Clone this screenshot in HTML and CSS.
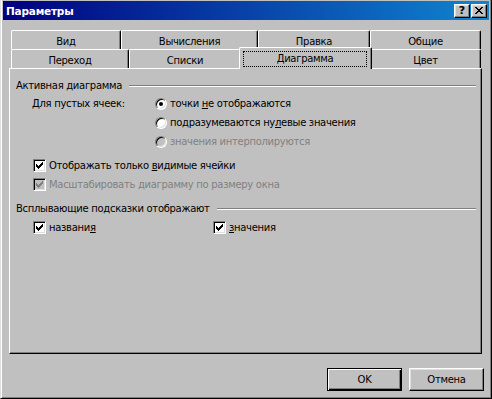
FILE: index.html
```html
<!DOCTYPE html>
<html lang="ru">
<head>
  <meta charset="UTF-8">
  <title>Параметры</title>
  <link rel="stylesheet" href="styles.css">
</head>
<body>
  <div class="window">
    <!-- title bar -->
    <div class="titlebar">
      <span class="title">Параметры</span>
      <div class="caption-buttons">
        <span class="cap-btn cap-help">?</span>
        <span class="cap-btn">
          <svg width="8" height="7" viewBox="0 0 8 7" shape-rendering="crispEdges"><path d="M0 0h2v1H0zM6 0h2v1H6zM1 1h2v1H1zM5 1h2v1H5zM2 2h4v1H2zM3 3h2v1H3zM2 4h4v1H2zM1 5h2v1H1zM5 5h2v1H5zM0 6h2v1H0zM6 6h2v1H6z" fill="#000"/></svg>
        </span>
      </div>
    </div>

    <!-- tabs, two rows -->
    <div class="tabs">
      <div class="tab-row">
        <div class="tab tab-view">Вид</div>
        <div class="tab tab-calc">Вычисления</div>
        <div class="tab tab-edit">Правка</div>
        <div class="tab tab-general">Общие</div>
      </div>
      <div class="tab-row">
        <div class="tab tab-move">Переход</div>
        <div class="tab tab-lists">Списки</div>
        <div class="tab tab-chart active"><span class="focus">Диаграмма</span></div>
        <div class="tab tab-color">Цвет</div>
      </div>
    </div>

    <div class="panel">
      <div class="group-head">
        <span>Активная диаграмма</span>
        <span class="rule"></span>
      </div>

      <div class="empty-cells">
        <span class="empty-label">Для пустых ячеек:</span>
        <div class="radios">
          <div class="option">
            <span class="radio checked"></span>
            <span>точки <u>н</u>е отображаются</span>
          </div>
          <div class="option">
            <span class="radio"></span>
            <span>подразумеваются ну<u>л</u>евые значения</span>
          </div>
          <div class="option disabled">
            <span class="radio"></span>
            <span>значения интерполируются</span>
          </div>
        </div>
      </div>

      <div class="option cb-first indent">
        <span class="check"><svg width="7" height="7" viewBox="0 0 7 7" shape-rendering="crispEdges"><path d="M0 2h1v3H0zM1 3h1v3H1zM2 4h1v3H2zM3 3h1v3H3zM4 2h1v3H4zM5 1h1v3H5zM6 0h1v3H6z"/></svg></span>
        <span>Отображать только <u>в</u>идимые ячейки</span>
      </div>
      <div class="option cb-next indent disabled">
        <span class="check"><svg width="7" height="7" viewBox="0 0 7 7" shape-rendering="crispEdges"><path d="M0 2h1v3H0zM1 3h1v3H1zM2 4h1v3H2zM3 3h1v3H3zM4 2h1v3H4zM5 1h1v3H5zM6 0h1v3H6z"/></svg></span>
        <span>Масштабировать диаграмму по размеру окна</span>
      </div>

      <div class="group-head second">
        <span>Всплывающие подсказки отображают</span>
        <span class="rule"></span>
      </div>

      <div class="tips">
        <div class="option tip-names">
          <span class="check"><svg width="7" height="7" viewBox="0 0 7 7" shape-rendering="crispEdges"><path d="M0 2h1v3H0zM1 3h1v3H1zM2 4h1v3H2zM3 3h1v3H3zM4 2h1v3H4zM5 1h1v3H5zM6 0h1v3H6z"/></svg></span>
          <span>названи<u>я</u></span>
        </div>
        <div class="option">
          <span class="check"><svg width="7" height="7" viewBox="0 0 7 7" shape-rendering="crispEdges"><path d="M0 2h1v3H0zM1 3h1v3H1zM2 4h1v3H2zM3 3h1v3H3zM4 2h1v3H4zM5 1h1v3H5zM6 0h1v3H6z"/></svg></span>
          <span><u>з</u>начения</span>
        </div>
      </div>
    </div>

    <div class="buttons">
      <button class="btn default">OK</button>
      <button class="btn">Отмена</button>
    </div>
  </div>
</body>
</html>
```

FILE: styles.css
```css
*{
  box-sizing: border-box;
}
body{
  margin: 0;
  background: #c0c0c0;
  font-family: "DejaVu Sans", sans-serif;
  font-size: 10px;
  letter-spacing: -0.3px;
  color: #000;
}
u{
  text-decoration: underline;
  text-underline-offset: 1px;
}

.window{
  width: 492px;
  height: 399px;
  background: #c0c0c0;
  border-left: 1px solid #dfdfdf;
  border-right: 1px solid #000;
  border-bottom: 1px solid #000;
  box-shadow: inset 1px 0 #fff, inset -1px -1px #808080;
  padding: 1px 2px 0 2px;
  display: flex;
  flex-direction: column;
}

/* title bar */
.titlebar{
  height: 19px;
  background: linear-gradient(to right, #000080, #1084d0);
  display: flex;
  align-items: center;
  padding: 0 2px 0 3px;
}
.title{
  color: #fff;
  font-weight: bold;
  font-size: 10.5px;
  letter-spacing: -0.2px;
}
.caption-buttons{
  margin-left: auto;
  display: flex;
  gap: 1px;
}
.cap-btn{
  width: 16px;
  height: 14px;
  background: #c0c0c0;
  border: 1px solid;
  border-color: #fff #000 #000 #fff;
  box-shadow: inset -1px -1px #808080, inset 1px 1px #dfdfdf;
  display: flex;
  align-items: center;
  justify-content: center;
}
.cap-help{
  font-weight: bold;
  font-size: 11px;
  line-height: 12px;
  letter-spacing: 0;
}

/* tabs */
.tabs{
  margin-top: 10px;
  padding-left: 8px;
}
.tab-row{
  display: flex;
}
.tab{
  height: 19px;
  border-left: 1px solid #fff;
  border-top: 1px solid #fff;
  border-right: 1px solid #000;
  border-radius: 2px 2px 0 0;
  box-shadow: inset -1px 0 #808080;
  background: #c0c0c0;
  text-align: center;
  padding-top: 4px;
  line-height: 13px;
}
.tab-view{ width: 110px; }
.tab-calc{ width: 137px; }
.tab-edit{ width: 112px; }
.tab-general{ width: 111px; }
.tab-move{ width: 118px; }
.tab-lists{ width: 112px; }
.tab-chart{ width: 129px; }
.tab-color{ width: 111px; }

.tab.active{
  position: relative;
  z-index: 1;
  width: 133px;
  height: 22px;
  margin: -2px -2px -1px;
  padding: 3px 4px 0 3px;
}
.focus{
  display: block;
  height: 16px;
  line-height: 14px;
  border: 1px dotted #000;
}

/* panel */
.panel{
  margin: 0 7px 0 6px;
  height: 286px;
  border-left: 1px solid #fff;
  border-top: 1px solid #fff;
  border-right: 1px solid #000;
  border-bottom: 1px solid #000;
  box-shadow: inset -1px -1px #808080;
  padding: 10px 5px 0 6px;
}
.group-head{
  display: flex;
  align-items: center;
  height: 13px;
  line-height: 13px;
}
.group-head.second{
  margin-top: 11px;
}
.rule{
  flex: 1;
  height: 2px;
  margin-left: 7px;
  border-top: 1px solid #808080;
  border-bottom: 1px solid #fff;
}

.empty-cells{
  display: flex;
  margin-top: 5px;
}
.empty-label{
  width: 139px;
  padding-left: 16px;
  line-height: 13px;
}
.radios{
  display: flex;
  flex-direction: column;
  gap: 6px;
}

.option{
  display: flex;
  align-items: center;
  gap: 3px;
  height: 13px;
  line-height: 13px;
  white-space: nowrap;
}
.option.disabled{
  color: #808080;
}
.indent{
  margin-left: 17px;
}
.cb-first{
  margin-top: 11px;
}
.cb-next{
  margin-top: 6px;
}

.radio{
  width: 12px;
  height: 12px;
  border-radius: 50%;
  background: #fff;
  border: 1px solid;
  border-color: #808080 #fff #fff #808080;
  box-shadow: inset 1px 1px #000, inset -1px -1px #dfdfdf;
  display: flex;
  align-items: center;
  justify-content: center;
}
.radio.checked::after{
  content: "";
  width: 4px;
  height: 4px;
  border-radius: 50%;
  background: #000;
}
.disabled .radio,
.disabled .check{
  background: #c0c0c0;
}

.check{
  width: 13px;
  height: 13px;
  flex: none;
  background: #fff;
  border: 1px solid;
  border-color: #808080 #fff #fff #808080;
  box-shadow: inset 1px 1px #000, inset -1px -1px #dfdfdf;
  padding: 2px;
  display: flex;
}
.check svg{
  fill: #000;
}
.disabled .check svg{
  fill: #808080;
}

.tips{
  display: flex;
  margin: 6px 0 0 17px;
}
.tip-names{
  width: 180px;
}

/* bottom buttons */
.buttons{
  display: flex;
  justify-content: flex-end;
  gap: 7px;
  margin-top: 14px;
  padding-right: 5px;
}
.btn{
  width: 75px;
  height: 23px;
  font-family: "DejaVu Sans", sans-serif;
  font-size: 10px;
  letter-spacing: -0.3px;
  color: #000;
  background: #c0c0c0;
  border: 1px solid;
  border-color: #fff #000 #000 #fff;
  box-shadow: inset -1px -1px #808080, inset 1px 1px #dfdfdf;
  padding: 0;
}
.btn.default{
  border-color: #000;
  box-shadow: inset 1px 1px #fff, inset -1px -1px #000, inset -2px -2px #808080;
}
```
